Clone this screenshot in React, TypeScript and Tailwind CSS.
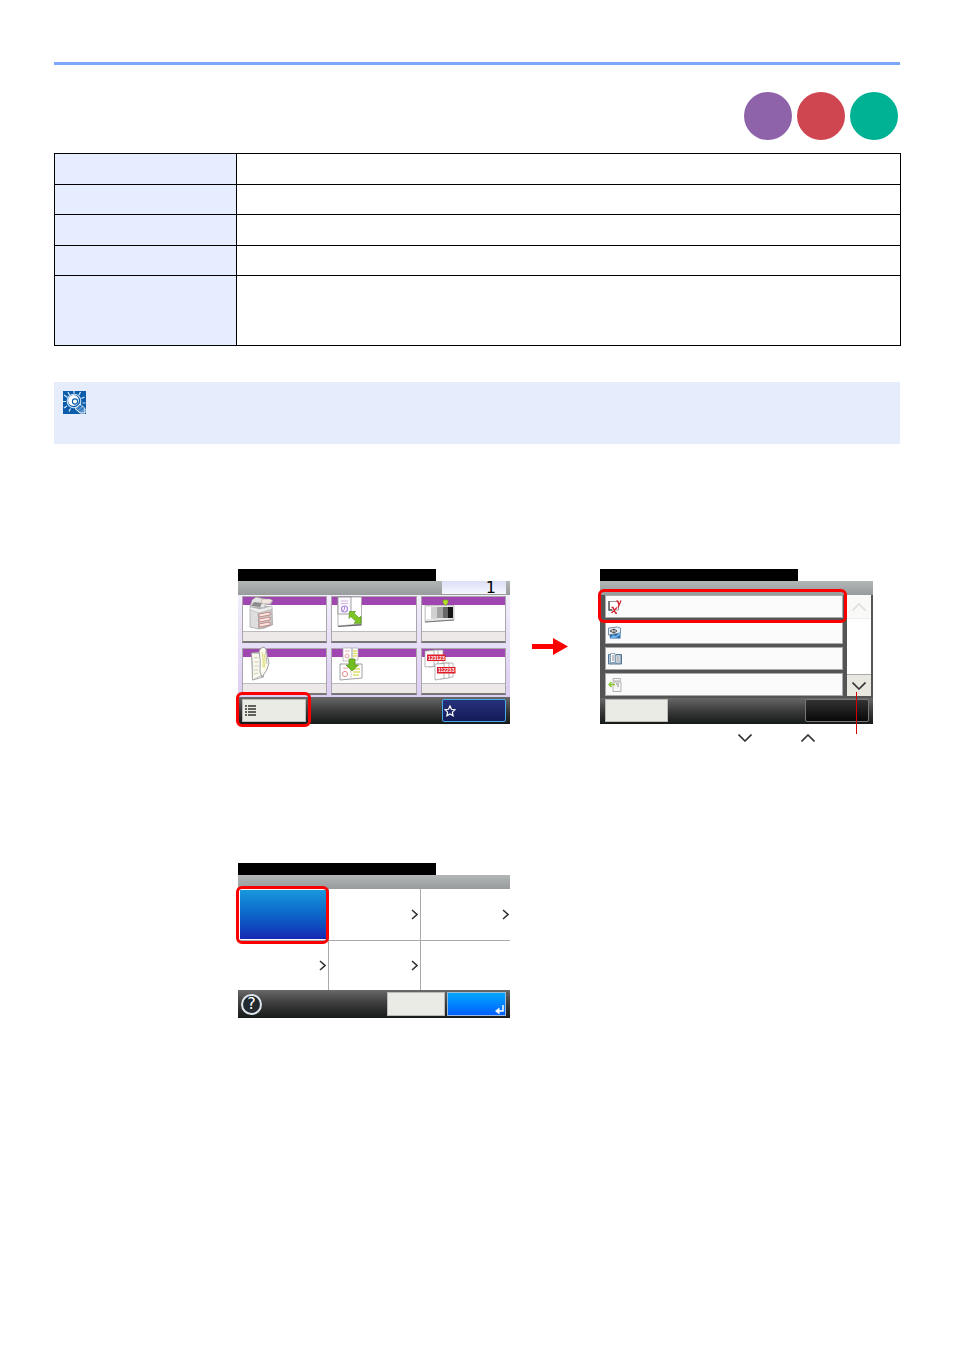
import React from 'react';
import clsx from 'clsx';

const badges = [
  { id: 'copy', color: 'bg-[#8e63aa]' },
  { id: 'send', color: 'bg-[#cf4550]' },
  { id: 'box', color: 'bg-[#00b294]' },
];

const specRows = ['h-[31px]', 'h-[30px]', 'h-[31px]', 'h-[30px]', 'h-[70px]'];

/* ---------- Icons ---------- */

function TipIcon() {
  return (
    <svg width="23" height="23" viewBox="0 0 23 23" aria-hidden="true">
      <rect width="23" height="23" fill="#0b5cab" />
      <path
        d="M11 0v2.500M5 1l1.500 3M17.500 1L16 4M1 4l3.500 2.500M21.500 6L18.500 7.500M0 10.500h3M1 17l3-2M6 20.500l1.500-3M19.500 12h3"
        stroke="#d6e8fa"
        strokeWidth="1.200"
        fill="none"
      />
      <circle cx="11" cy="10" r="6.800" fill="none" stroke="#d6e8fa" strokeWidth="1.100" />
      <circle cx="10.500" cy="9.500" r="5.400" fill="#fff" />
      <circle cx="12" cy="10.500" r="2.600" fill="#fff" stroke="#0b5cab" strokeWidth="1.100" />
      <path d="M12 17.500l5-4.500 5 4.500v4.500h-5z" fill="#5b96cf" stroke="#fff" strokeWidth="1" />
      <path d="M14.500 18l4-3.500M16.500 20l4-3.500" stroke="#0b5cab" strokeWidth=".9" />
    </svg>
  );
}

function PaperSourceIcon() {
  return (
    <>
      <path d="M8 13l5-3h17l1 19-10 4-13-2z" fill="#b5b5b5" />
      <path d="M8 13l9 2v18l-9-2z" fill="#dedede" stroke="#999" strokeWidth=".6" />
      <path d="M16 15l14-3v17l-13 4z" fill="#cfcccc" stroke="#999" strokeWidth=".6" />
      <path d="M8 10l9 3 13-3v3l-13 4-9-3z" fill="#eee" stroke="#999" strokeWidth=".4" />
      <path d="M10 4l4-3 9 2 7 1-1 4-6 1v3l-15-1z" fill="#e4e4e4" stroke="#999" strokeWidth=".6" />
      <path d="M12 6l8 1-2 4-9-1z" fill="#8b8b8b" />
      <path d="M20 3h8l3 2-5 3-7-1z" fill="#f5e7e0" stroke="#999" strokeWidth=".5" />
      <g fill="#ffe5e2" stroke="#b87a76" strokeWidth=".8">
        <path d="M17 18l11-2v3l-11 2z" />
        <path d="M17 23l11-2v3l-11 2z" />
        <path d="M17 28l11-2v3l-11 2z" />
      </g>
    </>
  );
}

function ZoomIcon() {
  return (
    <>
      <path d="M7 1h23.500v27L7 30z" fill="#fff" stroke="#a4a4a4" strokeWidth=".8" />
      <path d="M7 30l23.500-2v1.500L7 31z" fill="#666" />
      <path d="M7 1h13v17H7z" fill="#faf8ff" stroke="#888" strokeWidth=".8" />
      <path d="M10 5h7M10 7.500h7" stroke="#d6b8df" strokeWidth="1" />
      <circle cx="13.500" cy="13" r="3" fill="none" stroke="#a98bd6" strokeWidth="1.200" />
      <path d="M13.500 10.500v3l-2 1.500" fill="none" stroke="#a680d0" strokeWidth=".9" />
      <path d="M18.500 15.500h6l-1.500 1.700 5 4.800 2-1.700v7h-7l1.800-2-5-4.800-1.800 2z" fill="#7cc522" stroke="#4e9412" strokeWidth=".7" />
    </>
  );
}

function DensityIcon() {
  return (
    <>
      <path d="M4 9.500h29V24L4 26z" fill="#e6e6e6" stroke="#aaa" strokeWidth=".6" />
      <path d="M4 26l29-2" stroke="#777" strokeWidth="1.200" />
      <path d="M5 11h5v12H5z" fill="#fff" />
      <path d="M10 11h6v11.500h-6z" fill="#d0d0d0" />
      <path d="M16 11h6v11h-6z" fill="#a4a4a4" />
      <path d="M22 11h5v11h-5z" fill="#686868" />
      <path d="M27 11h5v11h-5z" fill="#161616" />
      <path d="M22 4h5v3l-2.500 2.500L22 7z" fill="#b9e02c" stroke="#6b9b25" strokeWidth=".7" />
    </>
  );
}

function DuplexIcon() {
  return (
    <>
      <path d="M9.500 5l8-1 4 25-11 3z" fill="#fff" stroke="#888" strokeWidth=".7" />
      <path d="M9.500 5q2 14 1 27l10-5 3-21z" fill="#fafaf2" stroke="#999" strokeWidth=".6" />
      <path d="M17 3q2-4 5-4 3 2 3 7l2 9q-1 7-7 14l-2-5q1-12-1-21z" fill="#fffef3" stroke="#888" strokeWidth=".8" />
      <path d="M20 4q2 8 1 15M22 6q2 7 0 14" stroke="#e1df80" strokeWidth="1.200" fill="none" />
      <path d="M12 10l4-.5M12.500 14h4M12.500 18h4M12 22h4M12 26l4-1" stroke="#c8c8a8" strokeWidth="1" />
      <path d="M23.500 3q1 7 1.500 13" stroke="#aaa" strokeWidth=".8" fill="none" />
    </>
  );
}

function CombineIcon() {
  return (
    <>
      <path d="M12 0h9v13h-9zM21 0h6v12h-6z" fill="#fff" stroke="#aaa" strokeWidth=".7" />
      <circle cx="16" cy="8" r="2" fill="#fff" stroke="#e9a0a0" />
      <path d="M14 3h5" stroke="#e8b0b0" />
      <path d="M22 3h4M22 5.500h4M22 8h4" stroke="#dcdd67" strokeWidth="1.300" />
      <path d="M9 16h22v14L9 32z" fill="#fff" stroke="#888" strokeWidth=".8" />
      <path d="M20 16v14" stroke="#bbb" strokeWidth=".7" />
      <circle cx="14" cy="26" r="2.600" fill="#fff" stroke="#e88" />
      <path d="M12 20h5" stroke="#e8b0b0" />
      <path d="M22 21h7M22 24h7M22 27h6" stroke="#dcdd67" strokeWidth="1.300" />
      <path d="M18 11h6v6h3.500L21 23l-6-6h3z" fill="#72bd1f" stroke="#4e9412" strokeWidth=".7" />
    </>
  );
}

function CollateIcon() {
  return (
    <>
      <g fill="#fff" stroke="#999" strokeWidth=".7">
        <path d="M12 2h10v15l-10 1z" />
        <path d="M8 2.500l9-.5v16l-9 1z" />
        <path d="M4 3l9-.5v16L4 19z" />
        <path d="M23 15h9v14l-9 1z" />
        <path d="M19 15.500l9-.5v15l-9 1z" />
        <path d="M14 16l9-.5v15L14 32z" />
      </g>
      <path d="M6 6.500h18.500V13H6zM16 19h18.500v6.500H16z" fill="#df1d26" />
      <g fill="#fff" fontFamily="Liberation Sans, sans-serif" fontSize="5" fontWeight="700">
        <text x="7" y="12">123123</text>
        <text x="17" y="24">112233</text>
      </g>
    </>
  );
}

function XYZoomIcon() {
  return (
    <svg width="14" height="14" viewBox="0 0 14 14" aria-hidden="true">
      <path d="M1 1.500h9.500V10H1z" fill="#fff" stroke="#999" />
      <path d="M1 1v9h3" stroke="#555" strokeWidth="1.300" fill="none" />
      <path d="M8.500 1h1l1.500 3.500M13 .5L10 7.500M3.500 7.500H5L7.500 13H9M9 7.500L3.500 13" stroke="#d8222a" strokeWidth="1.300" fill="none" />
    </svg>
  );
}

function ImageQualityIcon() {
  return (
    <svg width="14" height="14" viewBox="0 0 14 14" aria-hidden="true">
      <path d="M1 5h11.500v7.500H2z" fill="#2b69a4" />
      <path d="M.5 2l9-1 3 1v5L.5 9z" fill="#e6edf3" stroke="#5b7b98" strokeWidth=".8" />
      <path d="M2 5l4-2v4zM6 3l3 2-3 2" stroke="#444" strokeWidth=".9" fill="none" />
      <path d="M2 12l3-3 3 1 4-4v3l-4 3z" fill="#6cb1e5" />
    </svg>
  );
}

function BookIcon() {
  return (
    <svg width="14" height="14" viewBox="0 0 14 14" aria-hidden="true">
      <path d="M.5 2.500h5.500l1 1 1-1h5.500v9.500H.5z" fill="#abc6dc" stroke="#476985" strokeWidth=".9" />
      <path d="M2.500 1.500h4.500v9H2.500zM8 3h4v8H8z" fill="#fff" stroke="#68859c" strokeWidth=".7" />
      <path d="M4 4h2M4 6h2M4 8h2M9 5h2M9 7h2M9 9h2" stroke="#667" strokeWidth=".8" />
    </svg>
  );
}

function EraseIcon() {
  return (
    <svg width="14" height="14" viewBox="0 0 14 14" aria-hidden="true">
      <path d="M5 .5h7.500V3H5zM5 4h8v9.500H5z" fill="#f7f7f7" stroke="#aaa" strokeWidth=".9" />
      <path d="M8 6h3M9 8h2" stroke="#888" />
      <path d="M7 6.500H1.500M3.500 4L1 6.500 3.500 9" stroke="#8ac832" strokeWidth="1.500" fill="none" />
    </svg>
  );
}

type ChevronProps = { dir: 'up' | 'down' | 'right'; className?: string };

function Chevron({ dir, className = 'text-[#333]' }: ChevronProps) {
  const stroke = { fill: 'none', stroke: 'currentColor', strokeWidth: 1.6 };
  if (dir === 'right') {
    return (
      <svg width="7" height="11" viewBox="0 0 7 11" className={className} aria-hidden="true">
        <path d="M1 1l5 4.500L1 10" {...stroke} />
      </svg>
    );
  }
  return (
    <svg width="14" height="8" viewBox="0 0 14 8" className={className} aria-hidden="true">
      <path d={dir === 'up' ? 'M.5 7.500L7 1l6.500 6.500' : 'M.5.5L7 7l6.500-6.500'} {...stroke} />
    </svg>
  );
}

/* ---------- Screen parts ---------- */

type ScreenProps = { children: React.ReactNode; count?: string; className?: string };

function Screen({ children, count, className = 'w-[272px]' }: ScreenProps) {
  return (
    <div className={clsx('relative shrink-0', className)}>
      <div className="h-3 w-[198px] bg-black" />
      <div className="flex h-[14px] justify-end bg-linear-to-b from-[#b3b6b6] to-[#989b9b] pr-1">
        {count && (
          <output className="h-[13px] w-16 bg-linear-to-b from-[#dcdff5] to-[#f6f7ff] pr-[10px] text-right font-['DejaVu_Sans',sans-serif] text-base leading-[14px] text-black">
            {count}
          </output>
        )}
      </div>
      {children}
    </div>
  );
}

function Footer({ children, className }: { children: React.ReactNode; className?: string }) {
  return (
    <div className={clsx('flex bg-linear-to-b from-[#686868] via-[#3b3b3b] to-[#161b18]', className)}>
      {children}
    </div>
  );
}

function Highlight({ className }: { className: string }) {
  return <div className={clsx('pointer-events-none absolute rounded-md border-3 border-[#fb0000]', className)} />;
}

const tiles = [
  { label: 'Paper selection', icon: <PaperSourceIcon /> },
  { label: 'Zoom', icon: <ZoomIcon /> },
  { label: 'Density', icon: <DensityIcon /> },
  { label: 'Duplex', icon: <DuplexIcon /> },
  { label: 'Combine', icon: <CombineIcon /> },
  { label: 'Collate', icon: <CollateIcon /> },
];

function CopyScreen() {
  return (
    <Screen count="1">
      <div className="grid grid-cols-3 gap-x-1 gap-y-[5px] bg-linear-to-b from-[#f2effb] to-[#dccdf3] px-1 pt-px pb-[2px]">
        {tiles.map((tile) => (
          <button
            key={tile.label}
            aria-label={tile.label}
            className="relative flex h-[47px] flex-col border border-[#aaa6aa] border-b-2 border-b-[#777] bg-white"
          >
            <span className="h-2 w-full bg-[#a046b0]" />
            <span className="mt-auto h-[10px] w-full border-t border-[#bbb] bg-[#ece9e8]" />
            <svg width="86" height="47" viewBox="0 0 86 47" className="absolute -top-px -left-px overflow-visible" aria-hidden="true">
              {tile.icon}
            </svg>
          </button>
        ))}
      </div>
      <Footer className="h-[27px] items-start justify-between px-1 pt-[2px]">
        <button aria-label="Functions" className="flex h-[23px] w-16 items-center border border-[#bbb] bg-[#ebebe5] pl-[2px]">
          <svg width="11" height="11" viewBox="0 0 11 11" aria-hidden="true">
            <path d="M0 1h2M3 1h8M0 4h2M3 4h8M0 7h2M3 7h8M0 10h2M3 10h8" stroke="#333" strokeWidth="1.300" />
          </svg>
        </button>
        <button aria-label="Favorites" className="flex h-[23px] w-16 items-center rounded-xs border border-[#45a8ea] bg-linear-to-b from-[#27327c] to-[#141b58] pl-[1px]">
          <svg width="12" height="12" viewBox="0 0 12 12" aria-hidden="true">
            <path d="M6 1l1.500 3.300 3.500.4-2.600 2.400.7 3.600L6 8.900l-3.100 1.800.7-3.600L1 4.700l3.500-.4z" fill="none" stroke="#fff" strokeWidth="1.200" />
          </svg>
        </button>
      </Footer>
      <Highlight className="-left-[2px] top-[123px] h-[35px] w-[75px]" />
    </Screen>
  );
}

const functions = [
  { label: 'XY zoom', icon: <XYZoomIcon /> },
  { label: 'Original image', icon: <ImageQualityIcon /> },
  { label: 'Booklet', icon: <BookIcon /> },
  { label: 'Border erase', icon: <EraseIcon /> },
];

function FunctionListScreen() {
  return (
    <Screen className="w-[273px]">
      <div className="flex gap-1 bg-[#555] pr-[2px] pb-[2px] pl-[5px]">
        <div className="flex flex-1 flex-col gap-[3px]">
          {functions.map((item) => (
            <button
              key={item.label}
              aria-label={item.label}
              className="flex h-[23px] items-center border border-[#aaa] bg-[#fbfbfb] pl-[2px]"
            >
              {item.icon}
            </button>
          ))}
        </div>
        <div className="flex w-6 flex-col justify-between bg-white">
          <button aria-label="Scroll up" className="flex h-6 items-center justify-center border-b border-[#eee] bg-[#f9faf7]">
            <Chevron dir="up" className="text-[#dce2d9]" />
          </button>
          <button aria-label="Scroll down" className="flex h-[22px] items-center justify-center border-t border-[#aaa] bg-[#e8e8e0]">
            <Chevron dir="down" />
          </button>
        </div>
      </div>
      <Footer className="h-[26px] items-start justify-between pt-[1px] pr-1 pl-[5px]">
        <button aria-label="Back" className="h-[23px] w-[63px] border border-[#bbb] bg-[#ebebe5]" />
        <button aria-label="Close" className="h-[23px] w-16 rounded-xs border border-[#777] bg-linear-to-b from-[#333] to-[#090909]" />
      </Footer>
      <Highlight className="-left-[2px] top-5 h-[34px] w-[249px]" />
      <div className="absolute top-[123px] left-64 h-[42px] w-px bg-[#d40000]" />
    </Screen>
  );
}

const options = [
  { id: 'standard', selected: true, arrow: false },
  { id: 'auto', arrow: true },
  { id: 'manual', arrow: true },
  { id: 'preset', arrow: true },
  { id: 'custom', arrow: true },
];

function OptionScreen() {
  return (
    <Screen>
      <div className="grid grid-cols-[91px_92px_1fr] grid-rows-[52px_49px]">
        {options.map((option, i) => (
          <button
            key={option.id}
            aria-label={option.id}
            className={clsx(
              'flex items-center justify-end border-[#aaa]',
              i < 3 && 'border-b',
              i !== 2 && 'border-r',
              option.selected ? 'py-px pr-[2px] pl-[2px]' : i === 2 ? 'pr-px' : 'pr-[2px]'
            )}
          >
            {option.selected && <span className="size-full bg-linear-to-b from-[#1a98dc] to-[#1828b3]" />}
            {option.arrow && <Chevron dir="right" />}
          </button>
        ))}
      </div>
      <Footer className="h-7 items-center gap-[2px] pr-1 pl-[3px]">
        <button
          aria-label="Help"
          className="mr-auto size-[21px] rounded-full border-2 border-[#dfe6ee] bg-[#222a30] text-center font-['DejaVu_Sans',sans-serif] text-base leading-4 text-white"
        >
          ?
        </button>
        <button aria-label="Cancel" className="h-6 w-[58px] border border-[#bbb] bg-[#ebebe5]" />
        <button aria-label="OK" className="flex h-6 w-[59px] items-end justify-end border border-[#9bbbdc] bg-linear-to-b from-[#00a5ff] to-[#005dff]">
          <svg width="10" height="10" viewBox="0 0 10 10" aria-hidden="true">
            <path d="M8 0v6H2" fill="none" stroke="#fff" strokeWidth="1.500" />
            <path d="M4.500 2.500v7L0 6z" fill="#fff" />
          </svg>
        </button>
      </Footer>
      <Highlight className="-left-[2px] top-[23px] h-[58px] w-[93px]" />
    </Screen>
  );
}

export default function App() {
  return (
    <main className="bg-white px-[54px] pt-[62px] pb-16 font-['Liberation_Sans',Arial,sans-serif]">
      <hr className="h-[3px] border-0 bg-[#7da7f8]" />

      {/* Function badges */}
      <div className="mt-[27px] mr-[2px] flex justify-end gap-[5px]">
        {badges.map((badge) => (
          <span key={badge.id} className={clsx('size-12 rounded-full', badge.color)} />
        ))}
      </div>

      {/* Settings table */}
      <table className="mt-[13px] w-[calc(100%+1px)] table-fixed border-collapse border border-black">
        <tbody>
          {specRows.map((height, i) => (
            <tr key={i} className={height}>
              <th scope="row" className="w-[182px] border border-black bg-[#e5edff] p-0" />
              <td className="border border-black p-0" />
            </tr>
          ))}
        </tbody>
      </table>

      {/* Note */}
      <aside className="mt-9 min-h-[62px] bg-[#e5edfd] p-[9px]">
        <TipIcon />
      </aside>

      {/* Step 1 */}
      <section className="mt-[125px] ml-[184px] flex items-start">
        <CopyScreen />
        <svg width="36" height="17" viewBox="0 0 36 17" className="mt-[69px] mr-8 ml-[22px] shrink-0" aria-hidden="true">
          <path d="M0 6h21V0l15 8.500L21 17v-6H0z" fill="#f00" />
        </svg>
        <div>
          <FunctionListScreen />
          <div className="mt-[10px] flex gap-[49px] pl-[138px]">
            <Chevron dir="down" />
            <Chevron dir="up" />
          </div>
        </div>
      </section>

      {/* Step 2 */}
      <section className="mt-[121px] ml-[184px]">
        <OptionScreen />
      </section>
    </main>
  );
}
